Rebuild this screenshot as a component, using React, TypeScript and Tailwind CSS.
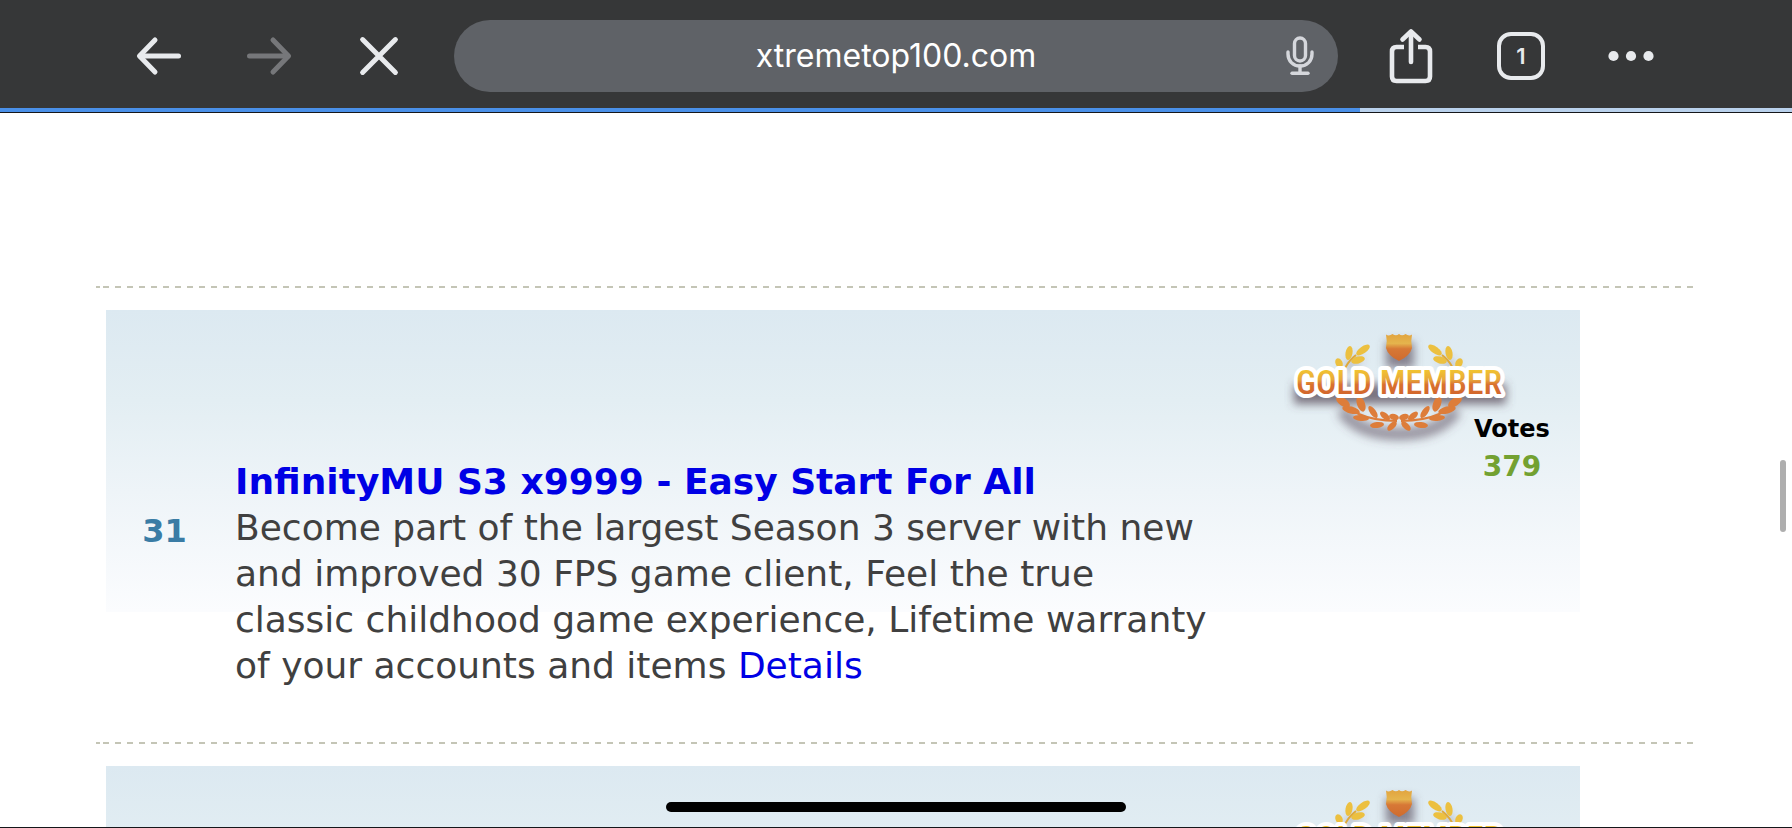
import type { ReactNode } from "react";

type Server = {
  id: number;
  rank?: number;
  title?: string;
  description?: string;
  votes?: number;
};

const servers: Server[] = [
  {
    id: 1,
    rank: 31,
    title: "InfinityMU S3 x9999 - Easy Start For All",
    description:
      "Become part of the largest Season 3 server with new and improved 30 FPS game client, Feel the true classic childhood game experience, Lifetime warranty of your accounts and items",
    votes: 379,
  },
  { id: 2 },
];

function ToolButton({ label, disabled, children }: { label: string; disabled?: boolean; children: ReactNode }) {
  return (
    <button
      type="button"
      aria-label={label}
      disabled={disabled}
      className="flex h-full w-[110px] shrink-0 items-center justify-center text-[#e8eaed] disabled:text-[#76777a]"
    >
      {children}
    </button>
  );
}

const stroke = {
  fill: "none",
  stroke: "currentColor",
  strokeWidth: 5,
  strokeLinecap: "round" as const,
  strokeLinejoin: "round" as const,
};

function Toolbar() {
  return (
    <header className="flex h-[108px] shrink-0 items-center bg-[#363738] pt-1 pr-[106px] pl-[104px]">
      <ToolButton label="Back">
        <svg width="60" height="60" viewBox="0 0 60 60" {...stroke}>
          <path d="M26 14 L10.500 30 L26 46" />
          <path d="M11 30 H49.500" />
        </svg>
      </ToolButton>
      <ToolButton label="Forward" disabled>
        <svg width="60" height="60" viewBox="0 0 60 60" {...stroke}>
          <path d="M34 14 L49.500 30 L34 46" />
          <path d="M49 30 H10.500" />
        </svg>
      </ToolButton>
      <ToolButton label="Stop">
        <svg width="60" height="60" viewBox="0 0 60 60" {...stroke}>
          <path d="M13.600 13.600 L46.400 46.400 M46.400 13.600 L13.600 46.400" />
        </svg>
      </ToolButton>

      <div className="mr-[18px] ml-5 flex h-[72px] min-w-0 flex-1 items-center rounded-full bg-[#5f6267]">
        <input
          type="text"
          aria-label="Address"
          defaultValue="xtremetop100.com"
          className="h-full min-w-0 flex-1 bg-transparent pb-[2px] pl-[76px] text-center font-['Inter',sans-serif] text-[32px] text-white outline-none"
        />
        <button type="button" aria-label="Voice search" className="flex w-[76px] justify-center pr-px text-[#d5d7dc]">
          <svg width="32" height="44" viewBox="0 0 32 44" {...stroke} strokeWidth={3.4}>
            <rect x="10.500" y="4" width="11" height="23" rx="5.500" />
            <path d="M4 18 V20 C4 27 9 32 16 32 C23 32 28 27 28 20 V18" />
            <path d="M16 32 V39" />
            <path d="M8 39.300 H24" />
          </svg>
        </button>
      </div>

      <ToolButton label="Share">
        <svg width="60" height="60" viewBox="0 0 60 60" {...stroke} strokeWidth={4.6}>
          <path
            d="M23 21 H15.500 Q11 21 11 25.500 V50.500 Q11 55 15.500 55 H44.500 Q49 55 49 50.500 V25.500 Q49 21 44.500 21 H37"
            strokeLinecap="butt"
          />
          <path d="M30 6 V36" />
          <path d="M21.500 13.500 L30 5.500 L38.500 13.500" />
        </svg>
      </ToolButton>
      <ToolButton label="Tabs">
        <span className="flex h-12 w-12 items-center justify-center rounded-[14px] border-4 border-[#e8eaed] font-['Inter',sans-serif] text-[22px] leading-none font-semibold">
          1
        </span>
      </ToolButton>
      <ToolButton label="More">
        <svg width="60" height="60" viewBox="0 0 60 60" fill="currentColor">
          <circle cx="12.500" cy="30" r="5.100" />
          <circle cx="30" cy="30" r="5.100" />
          <circle cx="47.500" cy="30" r="5.100" />
        </svg>
      </ToolButton>
    </header>
  );
}

function UpperLeaves() {
  return (
    <g fill="#ecc040">
      <ellipse cx="55" cy="41" rx="3.500" ry="5" transform="rotate(-25 55 41)" />
      <ellipse cx="65" cy="31" rx="3.500" ry="7" transform="rotate(10 65 31)" />
      <ellipse cx="79" cy="28" rx="3.500" ry="8" transform="rotate(55 79 28)" />
      <ellipse cx="74" cy="38" rx="3.500" ry="7" transform="rotate(75 74 38)" />
      <path d="M58 60 Q58 44 72 33" stroke="#dfa93a" strokeWidth="2" fill="none" />
    </g>
  );
}

function LowerLeaves() {
  return (
    <g fill="#dd7d3a">
      <path d="M56 74 Q66 98 113 99" stroke="#dd7d3a" strokeWidth="2" fill="none" />
      <ellipse cx="59" cy="80" rx="8" ry="4" transform="rotate(35 59 80)" />
      <ellipse cx="67" cy="88" rx="9" ry="3.500" transform="rotate(15 67 88)" />
      <ellipse cx="77" cy="82" rx="8" ry="4" transform="rotate(70 77 82)" />
      <ellipse cx="77" cy="96" rx="8" ry="3" transform="rotate(5 77 96)" />
      <ellipse cx="89" cy="90" rx="7" ry="3" transform="rotate(55 89 90)" />
      <ellipse cx="93" cy="103" rx="7" ry="3" transform="rotate(-6 93 103)" />
      <ellipse cx="101" cy="94" rx="6" ry="3" transform="rotate(40 101 94)" />
      <ellipse cx="108" cy="104" rx="6" ry="3" transform="rotate(-45 108 104)" />
      <ellipse cx="110" cy="95" rx="5" ry="3" transform="rotate(15 110 95)" />
    </g>
  );
}

function GoldBadge({ id }: { id: number }) {
  const gold = `gold-${id}`;
  const shield = `shield-${id}`;
  const shadow = `shadow-${id}`;
  return (
    <svg width="240" height="130" viewBox="0 0 240 130" role="img" aria-label="Gold member" className="mr-14">
      <defs>
        <linearGradient id={gold} gradientUnits="userSpaceOnUse" x1="0" y1="47" x2="0" y2="73">
          <stop offset="0" stopColor="#f2c62f" />
          <stop offset="0.400" stopColor="#e8a93c" />
          <stop offset="0.600" stopColor="#d9712f" />
          <stop offset="1" stopColor="#d2662c" />
        </linearGradient>
        <linearGradient id={shield} x1="0" y1="0" x2="0" y2="1">
          <stop offset="0" stopColor="#e2a43f" />
          <stop offset="0.350" stopColor="#e5b44d" />
          <stop offset="0.550" stopColor="#d77836" />
          <stop offset="1" stopColor="#cf6b2f" />
        </linearGradient>
        <filter id={shadow} x="-20%" y="-30%" width="140%" height="170%">
          <feGaussianBlur stdDeviation="5" />
        </filter>
      </defs>
      <g filter={`url(#${shadow})`} fill="#55495a" stroke="#55495a">
        <path d="M10 62 H222 V82 H10 Z" fillOpacity="0.750" stroke="none" />
        <path d="M58 88 Q74 112 115 112 Q156 112 172 88" fill="none" strokeWidth="13" strokeOpacity="0.550" />
        <path d="M102 20 H130 V46 H102 Z" fillOpacity="0.650" stroke="none" />
        <path d="M60 48 L76 36 M172 48 L158 36" fill="none" strokeWidth="8" strokeOpacity="0.300" />
      </g>
      <UpperLeaves />
      <LowerLeaves />
      <g transform="translate(230 0) scale(-1 1)">
        <UpperLeaves />
        <LowerLeaves />
      </g>
      <path
        d="M102 12.500 Q105 14.500 108.500 12 Q112 14.500 115 12 Q118 14.500 121.500 12 Q125 14.500 128 12.500 Q126.500 19 128 26 Q126 34 115 39 Q104 34 102 26 Q103.500 19 102 12.500 Z"
        fill={`url(#${shield})`}
      />
      <text
        x="115"
        y="72"
        textAnchor="middle"
        className="font-['Roboto_Condensed','Roboto',sans-serif] text-[34px] font-medium"
        fill={`url(#${gold})`}
        stroke="#ffffff"
        strokeWidth="8"
        strokeLinejoin="round"
        paintOrder="stroke"
      >
        GOLD MEMBER
      </text>
    </svg>
  );
}

function DashedRule() {
  return (
    <div className="mr-[3px] flex h-[2px] gap-[3px]">
      <span className="w-1 bg-[#c4c5b6]" />
      <span className="flex-1 bg-[repeating-linear-gradient(to_right,#c4c5b6_0px,#c4c5b6_6px,transparent_6px,transparent_12px)]" />
    </div>
  );
}

function ServerCard({ server }: { server: Server }) {
  return (
    <li>
      <DashedRule />
      <article className="mt-[22px] mr-[116px] ml-[10px] flex min-h-[432px] bg-[linear-gradient(to_bottom,#dce9f1_0%,#e3eef3_30%,#eef4f8_60%,#fbfcfe_100%)] bg-[length:100%_302px] bg-no-repeat">
        <div className="w-[117px] shrink-0 pt-[198px] text-center text-[32px] leading-[46px] font-bold text-[#3a7ca5]">
          {server.rank}
        </div>
        <div className="min-w-0 flex-1 pt-[149px] pb-[53px] pl-3 text-4xl leading-[46px] text-[#404040]">
          {server.title && (
            <h2 className="font-bold">
              <a href="#server" className="text-[#0000e5]">
                {server.title}
              </a>
            </h2>
          )}
          {server.description && (
            <p>
              {server.description}{" "}
              <a href="#details" className="text-[#0000e5]">
                Details
              </a>
            </p>
          )}
        </div>
        <div className="flex w-[360px] shrink-0 flex-col items-end pt-3">
          <GoldBadge id={server.id} />
          {server.votes !== undefined && (
            <div className="relative -mt-[42px] w-[136px] text-center font-bold">
              <div className="text-2xl leading-[38px] text-black">Votes</div>
              <div className="text-[28px] leading-[38px] text-[#73a131]">{server.votes}</div>
            </div>
          )}
        </div>
      </article>
    </li>
  );
}

export default function App() {
  return (
    <div className="relative flex h-screen flex-col overflow-hidden border-b border-[#15161a] bg-white">
      <Toolbar />
      <div className="flex h-[5px] shrink-0 border-b border-[#15161a] bg-[#b9d1ec]">
        <div className="w-[75.9%] bg-[#4a90e8]" />
      </div>
      <main className="min-h-0 flex-1 overflow-hidden px-24 pt-[173px] font-['DejaVu_Sans',sans-serif]">
        <ol>
          {servers.map((server) => (
            <ServerCard key={server.id} server={server} />
          ))}
        </ol>
      </main>
      <div className="absolute top-[460px] right-[6px] h-[72px] w-[6px] rounded-full bg-[#aeaeae]" />
      <div className="absolute bottom-[15px] left-1/2 h-[10px] w-[460px] -translate-x-1/2 rounded-full bg-black" />
    </div>
  );
}
